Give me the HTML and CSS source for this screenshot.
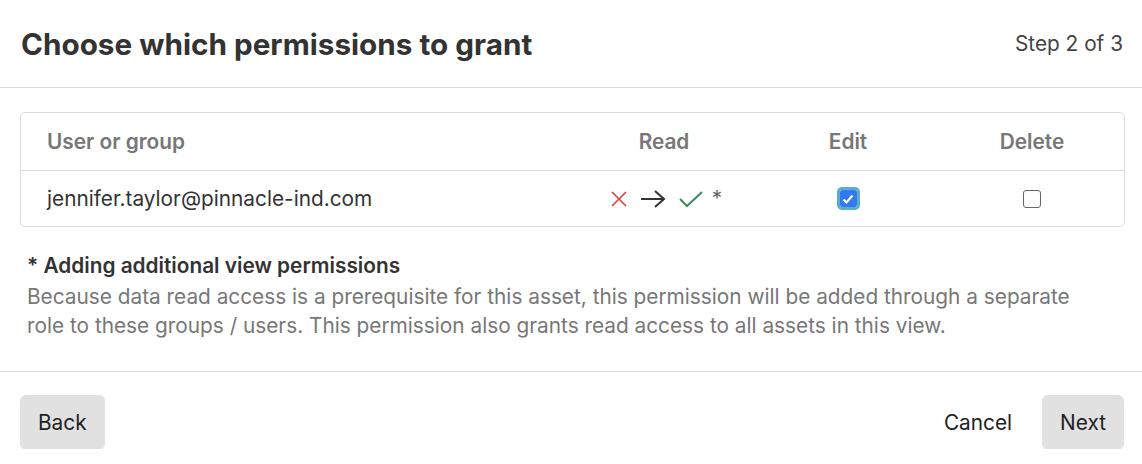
FILE: index.html
```html
<!DOCTYPE html>
<html lang="en">
<head>
    <meta charset="UTF-8">
    <title>Choose which permissions to grant</title>
    <link rel="stylesheet" href="styles.css">
</head>
<body>
<div class="dialog">
    <div class="dialog-header">
        <h1 class="title">Choose which permissions to grant</h1>
        <span class="step">Step 2 of 3</span>
    </div>
    <div class="dialog-body">
        <div class="perm-table">
            <div class="perm-row perm-head">
                <div class="cell cell-name">User or group</div>
                <div class="cell">Read</div>
                <div class="cell">Edit</div>
                <div class="cell">Delete</div>
            </div>
            <div class="perm-row">
                <div class="cell cell-name">jennifer.taylor@pinnacle-ind.com</div>
                <div class="cell read-change">
                    <svg class="icon" width="18" height="18" viewBox="0 0 18 18"><path d="M2 2L16 16M16 2L2 16" stroke="#e0403a" stroke-width="1.6" fill="none"/></svg>
                    <svg class="icon" width="26" height="20" viewBox="0 0 26 20"><path d="M1 10H24M15 2L24 10L15 18" stroke="#333" stroke-width="2" fill="none"/></svg>
                    <svg class="icon" width="26" height="20" viewBox="0 0 26 20"><path d="M2 10L9 17L24 3" stroke="#3a8a5c" stroke-width="2" fill="none"/></svg>
                    <span class="star">*</span>
                </div>
                <div class="cell"><span class="box checked"><svg width="14" height="14" viewBox="0 0 14 14"><path d="M2.5 7.5L5.5 10.5L11.5 3.5" stroke="#fff" stroke-width="2.2" fill="none"/></svg></span></div>
                <div class="cell"><span class="box"></span></div>
            </div>
        </div>
        <div class="note">
            <div class="note-title">* Adding additional view permissions</div>
            <p class="note-text">Because data read access is a prerequisite for this asset, this permission will be added through a separate role to these groups / users. This permission also grants read access to all assets in this view.</p>
        </div>
    </div>
    <div class="dialog-footer">
        <button class="btn">Back</button>
        <div class="actions">
            <button class="btn btn-plain">Cancel</button>
            <button class="btn">Next</button>
        </div>
    </div>
</div>
</body>
</html>
```
FILE: styles.css
```css
body {
    margin: 0;
    font-family: Inter, "Liberation Sans", sans-serif;
    color: #333;
    background: #fff;
}
.dialog {
    width: 1142px;
}
.dialog-header {
    display: flex;
    justify-content: space-between;
    align-items: center;
    height: 87px;
    padding: 0 19px 0 21px;
    border-bottom: 1px solid #dcdcdc;
}
.title {
    margin: 0;
    font-size: 29.7px;
    font-weight: 700;
    color: #333;
}
.step {
    font-size: 20.8px;
    color: #444;
}
.dialog-body {
    padding: 24px 17px 31px 20px;
    border-bottom: 1px solid #dcdcdc;
}
.perm-table {
    border: 1px solid #dcdcdc;
    border-radius: 5px;
}
.perm-row {
    display: grid;
    grid-template-columns: 1fr 184px 184px 184px;
    align-items: center;
    height: 55px;
    font-size: 20.8px;
}
.perm-head {
    height: 57px;
    border-bottom: 1px solid #dcdcdc;
    font-weight: 600;
    color: #777;
}
.cell {
    display: flex;
    justify-content: center;
    align-items: center;
}
.cell-name {
    justify-content: flex-start;
    padding-left: 26px;
}
.perm-row .cell-name {
    color: #333;
}
.perm-head .cell-name {
    color: #777;
}
.read-change {
    gap: 12px;
    padding-top: 1px;
    padding-left: 4px;
}
.star {
    color: #666;
    font-size: 20.8px;
    margin-top: -2px;
    margin-left: -4px;
}
.box {
    display: inline-flex;
    align-items: center;
    justify-content: center;
    width: 16px;
    height: 16px;
    border: 1.5px solid #666;
    border-radius: 3px;
}
.box.checked {
    width: 17px;
    height: 17px;
    border: none;
    border-radius: 2px;
    background: #3478f6;
    outline: 3px solid #5aafc8;
}
.note {
    padding: 26px 40px 0 7px;
    font-size: 20.8px;
}
.note-title {
    font-weight: 600;
    color: #333;
}
.note-text {
    margin: 4px 0 0;
    color: #777;
    line-height: 29px;
}
.dialog-footer {
    display: flex;
    justify-content: space-between;
    align-items: center;
    padding: 23px 18px 0 20px;
}
.actions {
    display: flex;
    align-items: center;
    gap: 12px;
}
.btn {
    font-family: inherit;
    font-size: 20.8px;
    color: #222;
    background: #e1e1e1;
    border: none;
    border-radius: 6px;
    height: 54px;
    padding: 0 18px;
    box-shadow: 0 1px 1px rgba(0,0,0,0.08);
}
.btn-plain {
    background: none;
    box-shadow: none;
}
```
